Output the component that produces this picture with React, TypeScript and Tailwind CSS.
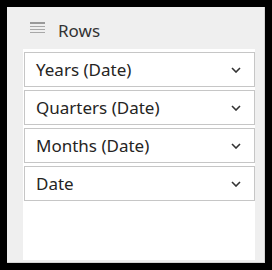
import React from "react";

const fields = ["Years (Date)", "Quarters (Date)", "Months (Date)", "Date"];

function Chevron() {
  return (
    <svg width="10" height="6" viewBox="0 0 10 6" className="text-[#333]">
      <path d="M1 1l4 4 4-4" fill="none" stroke="currentColor" strokeWidth={1.6} />
    </svg>
  );
}

function RowsIcon() {
  return (
    <svg width="15" height="14" viewBox="0 0 15 14">
      <rect x="0" y="0" width="15" height="2" fill="#9a9a9a" />
      <rect x="0" y="4" width="15" height="1" fill="#a8a8a8" />
      <rect x="0" y="7" width="15" height="1" fill="#a8a8a8" />
      <rect x="0" y="10" width="15" height="1" fill="#a8a8a8" />
    </svg>
  );
}

export default function App() {
  return (
    <div className="w-[272px] h-[270px] bg-black pt-[7px] pl-[7px]" style={{ fontFamily: '"Noto Sans", "Open Sans", sans-serif' }}>
      <div className="w-[258px] h-[256px] bg-[#efefef] border-r border-b border-[#d4d4d4] flex flex-col">
        <header className="h-[42px] flex items-start pt-[15px] pl-[23px] gap-[13px]">
          <RowsIcon />
          <span className="text-[17px] text-[#333] leading-none">Rows</span>
        </header>
        <div className="ml-[16px] w-[232px] h-[211px] bg-white pt-[3px] pl-[1px] flex flex-col gap-[3px]">
          {fields.map((f) => (
            <div
              key={f}
              className="w-[231px] h-[35px] border border-[#c6c6c6] flex items-center justify-between pl-[11px] pr-[13px]"
            >
              <span className="text-[17px] text-[#252423] leading-none">{f}</span>
              <Chevron />
            </div>
          ))}
        </div>
      </div>
    </div>
  );
}
